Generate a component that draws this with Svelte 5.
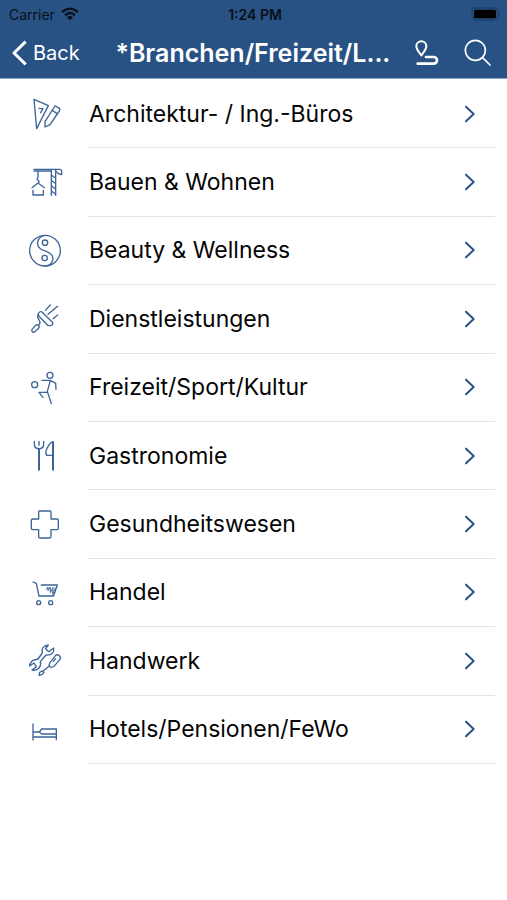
<script lang="ts">
  interface Category {
    label: string;
    icon: string;
  }

  const title = '*Branchen/Freizeit/L...';

  const categories: Category[] = [
    { label: 'Architektur- / Ing.-Büros', icon: 'drafting' },
    { label: 'Bauen & Wohnen', icon: 'crane' },
    { label: 'Beauty & Wellness', icon: 'yinyang' },
    { label: 'Dienstleistungen', icon: 'brush' },
    { label: 'Freizeit/Sport/Kultur', icon: 'player' },
    { label: 'Gastronomie', icon: 'cutlery' },
    { label: 'Gesundheitswesen', icon: 'cross' },
    { label: 'Handel', icon: 'cart' },
    { label: 'Handwerk', icon: 'tools' },
    { label: 'Hotels/Pensionen/FeWo', icon: 'bed' }
  ];
</script>

<div class="screen">
  <header class="header">
    <div class="status">
      <span class="carrier">
        Carrier
        <svg class="wifi" viewBox="0 0 54 42" aria-hidden="true">
          <path d="M3 15Q27-5 51 15" />
          <path d="M12 25Q27 11 42 25" />
          <path class="solid" d="M18 31Q27 23 36 31L27 40Z" />
        </svg>
      </span>
      <span class="time">1:24 PM</span>
      <svg class="battery" viewBox="0 0 90 42" aria-hidden="true">
        <rect class="shell" x="3" y="3" width="78" height="36" rx="11" />
        <rect x="9" y="8" width="66" height="26" rx="5" />
        <path class="cap" d="M85 16q6 5 0 10z" />
      </svg>
    </div>

    <nav class="navbar">
      <button type="button" class="back">
        <svg viewBox="0 0 48 78" aria-hidden="true">
          <path d="M41 5L6 39L41 73" />
        </svg>
        Back
      </button>
      <h1>{title}</h1>
      <div class="actions">
        <button type="button" class="action" aria-label="Route">
          <svg class="route" viewBox="0 0 78 84" aria-hidden="true">
            <path d="M22 49C16 40 7 32 7 22a15 15 0 0 1 30 0C37 32 28 40 22 49Z" />
            <circle class="dot" cx="22" cy="21" r="4" />
            <path class="road" d="M36 54H59a10 10 0 0 1 0 20H11" />
          </svg>
        </button>
        <button type="button" class="action" aria-label="Search">
          <svg class="search" viewBox="0 0 84 84" aria-hidden="true">
            <circle cx="34" cy="34" r="30" />
            <path d="M56 56L78 78" />
          </svg>
        </button>
      </div>
    </nav>
  </header>

  <main>
    <ul class="list">
      {#each categories as category (category.label)}
        <li>
          <button type="button" class="row">
            <svg class="icon" viewBox="0 0 150 150" aria-hidden="true">
              {#if category.icon === 'drafting'}
                <path d="M42 31L85 50L50 119Z" />
                <path d="M57 58L69 59L62 71" />
                <path d="M107 51L119 59Q121 62 118 66L90 107L75 114L75 98L103 54Q105 50 107 51Z" />
                <path d="M97 64L110 73" />
              {:else if category.icon === 'crane'}
                <path d="M42 34H119Q125 34 125 40V50L117 48L107 40M42 39H94" />
                <path d="M94 34V112M107 34V112" />
                <path d="M95 52L106 60M95 68L106 76M95 84L106 92M95 100L106 108" />
                <path d="M54 40V58Q48 65 56 68Q59 72 54 75M36 89L54 75L73 89M39 97V111H70V97" />
              {:else if category.icon === 'yinyang'}
                <circle cx="75" cy="74" r="46" />
                <path d="M75 28C52 31 46 57 61 68C71 76 90 75 97 90C102 104 94 119 75 120" />
                <circle cx="75" cy="50" r="8" />
                <circle cx="74" cy="96" r="8" />
              {:else if category.icon === 'brush'}
                <path d="M36 106L46 95Q51 90 56 94Q60 99 54 105L43 114Q34 117 36 106Z" />
                <path d="M57 92C69 81 45 74 55 61" />
                <path d="M56 57Q60 51 66 54L97 85Q101 91 94 94L87 95Q83 95 80 91L57 67Q53 62 56 57Z" />
                <path d="M76 49L91 33M84 61L113 37M99 74L113 63" />
              {:else if category.icon === 'player'}
                <circle cx="90" cy="37" r="9" />
                <circle cx="44" cy="65" r="9" />
                <path d="M66 52H91L107 61L108 79M91 53L82 85L94 122M80 88H57L69 103" />
              {:else if category.icon === 'cutlery'}
                <path d="M43 31V40Q44 53 57 53Q70 53 71 40V31M57 31V43" />
                <path class="thick" d="M57 54V116M99 34V116" />
                <path d="M99 32Q92 33 86 43C79 54 76 67 80 73H97" />
              {:else if category.icon === 'cross'}
                <path d="M58 33H90Q93 33 93 37V57H112Q115 57 115 61V85Q115 89 111 89H93V109Q93 114 89 114H60Q56 114 56 110V89H38Q34 89 34 85V61Q34 57 38 57H56V36Q56 33 58 33Z" />
              {:else if category.icon === 'cart'}
                <path d="M39 42L49 46L57 84H101M64 51H112L101 83" />
                <path class="thin" d="M79 64L84 57V68L91 57L91 74L99 58L98 79L106 60" />
                <circle cx="56" cy="104" r="6" />
                <circle cx="92" cy="104" r="6" />
              {:else if category.icon === 'tools'}
                <path d="M29 86L37 74L54 69L67 51Q63 37 75 30L85 27L77 38L86 47L101 36Q103 45 97 52Q89 59 78 57L61 77Q64 86 57 96Q49 105 36 102L49 92L42 81L29 90Z" />
                <path d="M90 80L107 58Q113 54 119 60Q124 66 119 71L102 91Q94 97 89 91Q86 86 90 80Z" />
                <path d="M100 76L107 68M87 91L69 105M66 105L59 109L57 118L66 116L72 109Z" />
              {:else if category.icon === 'bed'}
                <path d="M39 57V105M40 81H58L65 72H109V104M40 96H109M58 81L65 87H109" />
              {/if}
            </svg>
            <span class="content">
              <span class="label">{category.label}</span>
              <svg class="chevron" viewBox="0 0 36 54" aria-hidden="true">
                <path d="M6 5L29 27L6 49" />
              </svg>
            </span>
          </button>
        </li>
      {/each}
    </ul>
  </main>
</div>

<style>
  :global(body) {
    margin: 0;
    background: #fff;
  }

  .screen {
    font-family: Inter, "Liberation Sans", sans-serif;
    color: #050505;
  }

  svg {
    display: block;
    flex: none;
    fill: none;
    stroke: currentColor;
    stroke-linecap: round;
    stroke-linejoin: round;
  }

  button {
    padding: 0;
    border: 0;
    background: none;
    font: inherit;
    color: inherit;
    text-align: left;
    cursor: pointer;
  }

  .header {
    background: #285284;
    border-bottom: 1px solid #8ba7cb;
  }

  .status {
    display: grid;
    grid-template-columns: 1fr auto 1fr;
    align-items: center;
    height: 28px;
    padding: 0 6px 0 9px;
    font-size: 14px;
    color: #0a0f18;
  }

  .carrier {
    display: flex;
    align-items: center;
    gap: 6px;
  }

  .time {
    font-weight: 600;
  }

  .wifi {
    width: 18px;
    height: 14px;
    stroke-width: 7;
    stroke-linecap: butt;
  }

  .solid {
    fill: currentColor;
    stroke: none;
  }

  .battery {
    justify-self: end;
    width: 30px;
    height: 14px;
    fill: #000;
    stroke: none;
  }

  .shell {
    fill: none;
    stroke: #1b3960;
    stroke-width: 3;
  }

  .cap {
    fill: #1b3960;
  }

  .navbar {
    display: flex;
    align-items: center;
    height: 50px;
    padding: 0 15px 0 12px;
    color: #fff;
  }

  .back {
    display: flex;
    align-items: center;
    gap: 5px;
    font-size: 20px;
  }

  .back svg {
    width: 16px;
    height: 26px;
    stroke-width: 9;
    stroke-linecap: butt;
  }

  h1 {
    flex: 1;
    margin: 0;
    padding-left: 12px;
    font-size: 25px;
    font-weight: 600;
    line-height: 32px;
    text-align: center;
    white-space: nowrap;
  }

  .actions {
    display: flex;
    align-items: center;
    gap: 24px;
  }

  .route {
    width: 26px;
    height: 28px;
    stroke-width: 6;
  }

  .dot {
    stroke: none;
    fill: #285284;
  }

  .road {
    stroke-width: 8;
  }

  .search {
    width: 28px;
    height: 28px;
    stroke-width: 5;
  }

  .list {
    display: grid;
    grid-auto-rows: 1fr;
    min-height: 76vh;
    margin: 0;
    padding: 1px 0 0;
    list-style: none;
  }

  li {
    display: grid;
  }

  .row {
    display: flex;
    align-items: center;
    padding: 0 12px 0 20px;
  }

  .icon {
    width: 50px;
    height: 50px;
    margin-right: 18px;
    color: #3d6498;
    stroke-width: 4;
  }

  .thick {
    stroke-width: 6;
  }

  .thin {
    stroke-width: 3;
  }

  .content {
    display: flex;
    flex: 1;
    align-items: center;
    justify-content: space-between;
    align-self: stretch;
    padding: 0 19px 0 1px;
    border-bottom: 1px solid #e4e4e6;
  }

  .label {
    font-size: 23px;
    line-height: 32px;
  }

  .chevron {
    width: 12px;
    height: 18px;
    color: #285284;
    stroke-width: 6;
  }
</style>
